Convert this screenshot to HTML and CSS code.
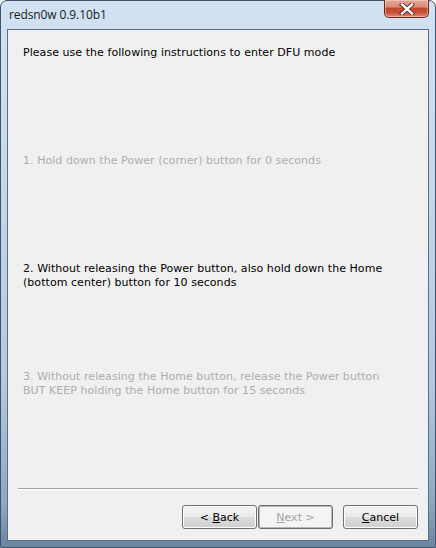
FILE: index.html
```html
<!DOCTYPE html>
<html lang="en">
<head>
    <meta charset="UTF-8">
    <title>redsn0w 0.9.10b1</title>
    <link rel="stylesheet" href="styles.css">
</head>
<body>

<!-- window frame -->
<div class="window">
    <div class="titlebar">
        <span class="title">redsn0w 0.9.10b1</span>
        <div class="close">
            <svg width="16" height="12" viewBox="0 0 16 12">
                <path d="M3 1.5 L13 10.5 M13 1.5 L3 10.5" stroke="#5a2418" stroke-width="4.2" stroke-linecap="square"/>
                <path d="M3 1.5 L13 10.5 M13 1.5 L3 10.5" stroke="#ffffff" stroke-width="2.4" stroke-linecap="square"/>
            </svg>
        </div>
    </div>

    <div class="client">
        <div class="steps">
            <p class="heading">Please use the following instructions to enter DFU mode</p>
            <p class="step off">1. Hold down the Power (corner) button for 0 seconds</p>
            <p class="step">2. Without releasing the Power button, also hold down the Home<br>(bottom center) button for 10 seconds</p>
            <p class="step off">3. Without releasing the Home button, release the Power button<br>BUT KEEP holding the Home button for 15 seconds</p>
        </div>

        <div class="separator"></div>

        <!-- wizard buttons -->
        <div class="buttons">
            <button class="btn">&lt; <u>B</u>ack</button>
            <button class="btn default" disabled><u>N</u>ext &gt;</button>
            <button class="btn cancel"><u>C</u>ancel</button>
        </div>
    </div>
</div>

</body>
</html>
```

FILE: styles.css
```css
html, body {
    margin: 0;
    padding: 0;
    background-color: #ffffff;
}
.window {
    width: 436px;
    height: 548px;
    box-sizing: border-box;
    border: 1px solid #3f5369;
    border-radius: 7px 7px 0 0;
    background: linear-gradient(to bottom, #d2e2f3 0, #c6d9ec 30%, #b3c9e0 70%, #8ea8c3 92%, #6a85a2 100%);
    display: flex;
    flex-direction: column;
    padding: 0 6px 6px 6px;
    font-family: "DejaVu Sans", sans-serif;
}
.titlebar {
    height: 28px;
    display: flex;
    align-items: flex-start;
    justify-content: space-between;
}
.title {
    font-family: "Open Sans", "Noto Sans", sans-serif;
    font-size: 12px;
    color: #1a1a1a;
    margin: 5px 0 0 2px;
    letter-spacing: -0.1px;
}
.close {
    width: 45px;
    height: 18px;
    margin-top: -1px;
    box-sizing: border-box;
    border: 1px solid #6c2a1e;
    border-top: none;
    border-radius: 0 0 5px 5px;
    background: linear-gradient(to bottom, #e7a596 0, #d88d79 40%, #c4472d 50%, #c9533a 75%, #df8d72 100%);
    display: flex;
    align-items: center;
    justify-content: center;
    box-shadow: inset 0 0 0 1px rgba(255, 255, 255, 0.35);
}
.client {
    flex: 1;
    border: 1px solid #5b6d80;
    background-color: #f0f0f0;
    display: flex;
    flex-direction: column;
    padding: 0 10px 0 10px;
}
.steps {
    display: grid;
    grid-template-rows: 108px 108px 108px 108px;
    padding: 16px 0 0 5px;
    height: 440px;
    box-sizing: border-box;
}
.steps p {
    margin: 0;
    font-size: 11px;
    line-height: 14px;
    color: #000;
    letter-spacing: 0.05px;
}
.steps p.off {
    color: #adadad;
}
.separator {
    margin-top: 18px;
    border-top: 1px solid #a0a0a0;
    border-bottom: 1px solid #ffffff;
}
.buttons {
    display: flex;
    justify-content: flex-end;
    margin-top: 15px;
}
.btn {
    width: 75px;
    height: 24px;
    margin-left: 1px;
    font-family: "DejaVu Sans", sans-serif;
    font-size: 11px;
    color: #000;
    border: 1px solid #707070;
    border-radius: 3px;
    background: linear-gradient(to bottom, #f2f2f2 0, #ebebeb 50%, #dddddd 50%, #cfcfcf 100%);
    box-shadow: inset 0 0 0 1px #fcfcfc;
    padding: 0;
}
.btn.default {
    border: 1px solid #6b6b6b;
    background: #f4f4f4;
    box-shadow: inset 0 0 0 1px #b8b8b8;
    color: #a3a3a3;
}
.btn.cancel {
    margin-left: 10px;
}
```
